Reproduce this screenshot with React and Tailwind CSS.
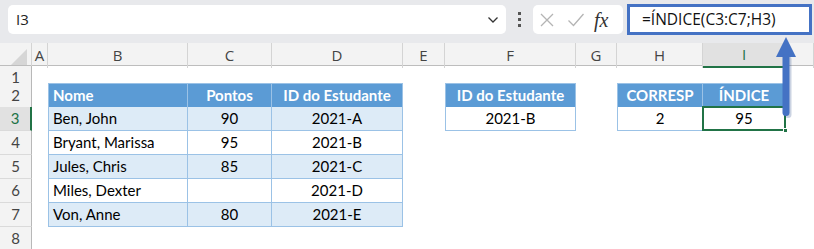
import React from 'react';

const COLS = 'grid grid-cols-[32px_16px_140px_84px_131px_42px_131px_41px_86px_83px_1fr]';
const LETTERS = ['A', 'B', 'C', 'D', 'E', 'F', 'G', 'H', 'I', 'J'];

const students = [
    ['Ben, John', '90', '2021-A'],
    ['Bryant, Marissa', '95', '2021-B'],
    ['Jules, Chris', '85', '2021-C'],
    ['Miles, Dexter', '', '2021-D'],
    ['Von, Anne', '80', '2021-E'],
];

function TCell({ children, head, shade, first, top, left, selected }) {
    let cls = 'relative flex items-center border-r border-b border-[#9bc2e6] ';
    if (first) cls += 'border-l ';
    if (top) cls += 'border-t ';
    cls += left ? 'justify-start pl-[4px] ' : 'justify-center ';
    if (head) cls += 'bg-[#5b9bd5] text-white font-bold ';
    else if (shade) cls += 'bg-[#ddebf7] text-black ';
    else cls += 'bg-white text-black ';
    return (
        <div className={cls}>
            {children}
            {selected && (
                <>
                    <div className="absolute top-[-1px] left-[-1px] right-[-1px] bottom-[-1px] border-2 border-[#217346]" />
                    <div className="absolute right-[-3px] bottom-[-3px] w-[5px] h-[5px] bg-[#217346] border border-white" />
                </>
            )}
        </div>
    );
}

function RowHead({ n, active }) {
    return (
        <div
            className={
                'flex items-center justify-center border-b border-[#dadada] text-[15px] ' +
                (active
                    ? 'bg-[#e1e1e1] text-[#217346] border-r-2 border-r-[#217346]'
                    : 'bg-[#f3f3f3] text-[#444] border-r border-r-[#b8b8b8]')
            }
        >
            {n}
        </div>
    );
}

function DataRow({ n, active, cells }) {
    // cells: object keyed by column letter
    return (
        <div className={COLS + ' h-[24px]'}>
            <RowHead n={n} active={active} />
            {LETTERS.map(l => (cells[l] ? <React.Fragment key={l}>{cells[l]}</React.Fragment> : <div key={l} />))}
        </div>
    );
}

export default function App() {
    const rows = students.map((s, i) => {
        const shade = i % 2 === 0;
        const cells = {
            B: <TCell first shade={shade} left>{s[0]}</TCell>,
            C: <TCell shade={shade}>{s[1]}</TCell>,
            D: <TCell shade={shade}>{s[2]}</TCell>,
        };
        if (i === 0) {
            cells.F = <TCell first>2021-B</TCell>;
            cells.H = <TCell first>2</TCell>;
            cells.I = <TCell selected>95</TCell>;
        }
        return { n: i + 3, cells };
    });

    return (
        <div className="relative w-[814px] h-[249px] overflow-hidden bg-white font-['Open_Sans',sans-serif]">
            {/* formula bar */}
            <div className="flex items-start h-[43px] bg-[#e8e9ec]">
                <div className="mt-[5px] ml-[8px] w-[498px] h-[29px] bg-white rounded-[5px] flex items-center justify-between pl-[8px] pr-[7px]">
                    <span className="text-[15px] text-[#222]">I3</span>
                    <svg width="12" height="8" viewBox="0 0 12 8">
                        <path d="M1.5 1.5 L6 6 L10.5 1.5" fill="none" stroke="#333" strokeWidth="1.3" />
                    </svg>
                </div>
                <div className="w-[27px] h-[39px] flex flex-col items-center justify-center gap-[3px]">
                    <div className="w-[3px] h-[3px] bg-[#555]" />
                    <div className="w-[3px] h-[3px] bg-[#555]" />
                    <div className="w-[3px] h-[3px] bg-[#555]" />
                </div>
                <div className="mt-[5px] w-[90px] h-[29px] bg-white rounded-[5px] flex items-center pl-[6px]">
                    <svg width="16" height="16" viewBox="0 0 16 16">
                        <path d="M2 2 L14 14 M14 2 L2 14" stroke="#b4b4b4" strokeWidth="1.3" />
                    </svg>
                    <svg width="18" height="16" viewBox="0 0 18 16" className="ml-[12px]">
                        <path d="M1.5 8.5 L6.5 13.5 L16.5 2" fill="none" stroke="#b4b4b4" strokeWidth="1.3" />
                    </svg>
                    <span className="ml-[9px] font-['Liberation_Serif',serif] italic text-[20px] leading-none text-[#333]">fx</span>
                </div>
                <div className="mt-[4px] ml-[4px] w-[185px] h-[31px] border-[3px] border-[#4472c4] bg-white flex items-center pl-[12px]">
                    <span className="text-[15.5px] text-[#111] whitespace-nowrap">=ÍNDICE(C3:C7;H3)</span>
                </div>
            </div>

            {/* column headers */}
            <div className={COLS + ' h-[23px] bg-[#f3f3f3] border-b border-[#bdbdbd]'}>
                <div className="flex items-end justify-end pr-[4px] pb-[3px] border-r border-[#d4d4d4]">
                    <svg width="16" height="16" viewBox="0 0 16 16">
                        <polygon points="16,0 16,16 0,16" fill="#d6d6d6" />
                    </svg>
                </div>
                {LETTERS.map(l => (
                    <div
                        key={l}
                        className={
                            'flex items-center justify-center text-[15px] ' +
                            (l === 'I'
                                ? 'bg-[#e1e1e1] text-[#217346] border-b-2 border-[#217346] border-r border-r-[#d4d4d4]'
                                : 'text-[#444] border-r border-[#d4d4d4]')
                        }
                    >
                        {l === 'J' ? '' : l}
                    </div>
                ))}
            </div>

            {/* sheet */}
            <div className="font-['Lato',sans-serif] text-[15px]">
                <div className={COLS + ' h-[17px]'}>
                    <RowHead n={1} />
                </div>
                <DataRow
                    n={2}
                    cells={{
                        B: <TCell head first top left>Nome</TCell>,
                        C: <TCell head top>Pontos</TCell>,
                        D: <TCell head top>ID do Estudante</TCell>,
                        F: <TCell head first top>ID do Estudante</TCell>,
                        H: <TCell head first top>CORRESP</TCell>,
                        I: <TCell head top>ÍNDICE</TCell>,
                    }}
                />
                {rows.map(r => (
                    <DataRow key={r.n} n={r.n} active={r.n === 3} cells={r.cells} />
                ))}
                <div className={COLS + ' h-[24px]'}>
                    <RowHead n={8} />
                </div>
            </div>

            {/* arrow from I3 to formula */}
            <svg className="absolute left-[772px] top-[34px]" width="28" height="90" viewBox="0 0 28 90">
                <rect x="12.5" y="22" width="7" height="62" rx="3.5" fill="#2f4f8a" opacity="0.25" />
                <polygon points="14,3 24,23 4,23" fill="#4472c4" />
                <rect x="10.5" y="20" width="7" height="62" rx="3.5" fill="#4472c4" />
            </svg>
        </div>
    );
}
